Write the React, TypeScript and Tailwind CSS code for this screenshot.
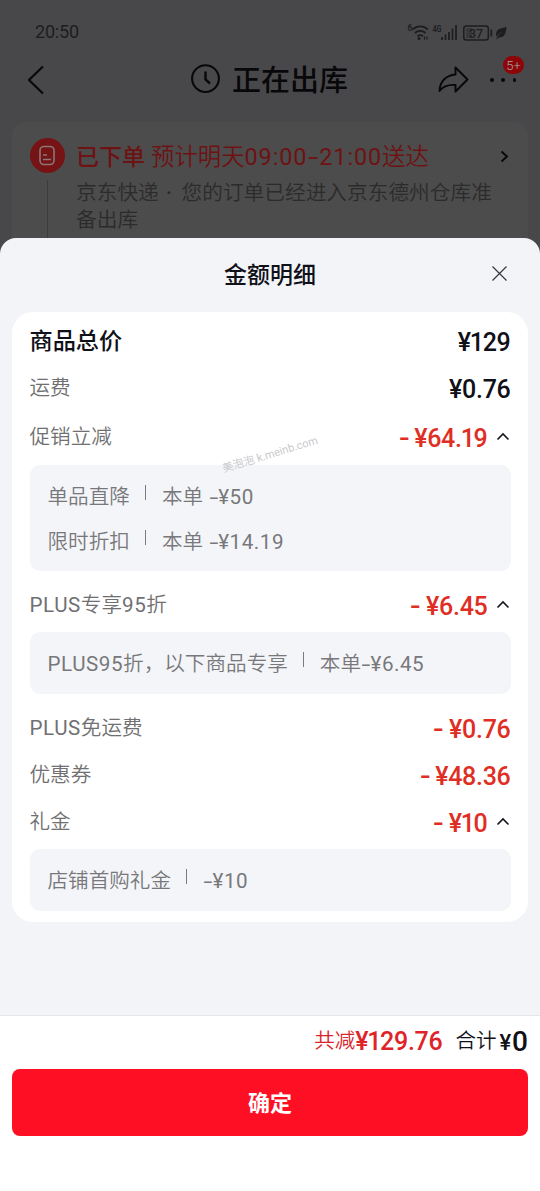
import { Fragment } from "react";

/* Latin runs are set slightly wider than the Chinese around them. */
function Mixed({ text, wide }: { text: string; wide?: boolean }) {
  const runs = text.match(/-|[\x20-\x2c\x2e-\x7e¥]+|[^\x20-\x7e¥]+/g) ?? [];
  return (
    <>
      {runs.map((run, i) => {
        if (run === "-") return <span key={i} className={`inline-block text-center font-normal ${wide ? "w-[12px]" : "w-[9.500px]"}`}><span className="inline-block scale-x-[1.550]">-</span></span>;
        if (/[\x20-\x7e¥]/.test(run)) return <span key={i} className={`font-normal ${wide ? "tracking-[0.900px]" : "tracking-[0.550px]"}`}>{run}</span>;
        return <Fragment key={i}>{run}</Fragment>;
      })}
    </>
  );
}

function Digits({ text }: { text: string }) {
  return (
    <span className="flex">
      {text.split("").map((c, i) => (
        <span key={i} className={c === "1" ? "-mr-[1px] -ml-[1px]" : ""}>{c}</span>
      ))}
    </span>
  );
}

function Chevron() {
  return (
    <svg className="mr-px ml-[8px] h-[14px] w-[14px]" viewBox="0 0 14 14" fill="none" stroke="#15151b" strokeWidth="1.600">
      <path d="M1.500 9.500 7 4l5.500 5.500" />
    </svg>
  );
}

function Amount({ text, discount }: { text: string; discount?: boolean }) {
  return (
    <span className={`flex items-center pt-[2px] text-[25px] leading-none font-medium tracking-[-0.300px] ${discount ? "text-[#df2f24]" : "text-[#101018]"}`}>
      {discount && <span className="mr-[6px] w-[9px] text-center"><span className="inline-block scale-x-[1.250]">-</span></span>}
      <Digits text={text} />
    </span>
  );
}

function Row({ label, amount, className, open, discount }: { label: string; amount: string; className: string; open?: boolean; discount?: boolean }) {
  return (
    <div className={`flex shrink-0 items-center justify-between ${className}`}>
      <span className="pt-[1px] text-[20.600px] leading-none font-[350] text-[#707072]"><Mixed text={label} /></span>
      <span className="flex items-center">
        <Amount text={amount} discount={discount} />
        {open && <Chevron />}
      </span>
    </div>
  );
}

function Detail({ name, value }: { name: string; value: string }) {
  return (
    <div className="flex h-[45px] items-center text-[20.600px] leading-none font-[350] text-[#78787b]">
      <span className="pt-[3px]"><Mixed text={name} /></span>
      <span className="mr-[16px] mb-[7px] ml-[15px] h-[15px] w-px bg-[#7c7c7f]" />
      <span className="pt-[3px] whitespace-pre"><Mixed text={value} /></span>
    </div>
  );
}

function StatusIcons() {
  return (
    <svg className="h-[20px] w-[102px]" viewBox="407 21 102 20" fill="none">
      <text x="407.500" y="30" fontSize="8.500" fontWeight="600" fill="#1d1d1f">6</text>
      <g stroke="#1d1d1f" strokeWidth="1.800">
        <path d="M412.500 28.500c4.500-4.200 11-4.200 15.500 0M415 32c3-2.700 7.500-2.700 10.500 0M417.500 35.200c1.600-1.300 3.800-1.300 5.400 0" />
      </g>
      <circle cx="419" cy="37.500" r="1.500" fill="#1d1d1f" />
      <path d="M424.500 35.500v3M427 35.500v3" stroke="#1d1d1f" strokeWidth="1.200" />
      <text x="432.500" y="31" fontSize="9" fontWeight="600" fill="#1d1d1f" textLength="9" lengthAdjust="spacingAndGlyphs">4G</text>
      <path d="M442 36v3M445.500 33.500V39M449 31v8M452.500 27.500V39M456 24v15" stroke="#1d1d1f" strokeWidth="1.700" />
      <rect x="463.800" y="25" width="24.500" height="14" rx="2.500" stroke="#1d1d1f" strokeWidth="1.500" />
      <rect x="466" y="27" width="6" height="10" fill="#38383a" />
      <text x="469" y="36.600" fontSize="13" fontWeight="500" fill="#1d1d1f" textLength="14" lengthAdjust="spacingAndGlyphs">37</text>
      <path d="M491.300 28.500v7" stroke="#1d1d1f" strokeWidth="1.700" />
      <path d="M506.500 26c-6 1.200-10 2-10.500 7 0 1.300.2 2 .6 2.600 2-2.600 3.900-4.100 6-5.100-2.500 1.800-4.700 4-6.400 7.300l1 .4 1-1.700c6 .8 8-4.500 8.300-10.500Z" fill="#1d1d1f" />
    </svg>
  );
}

export default function App() {
  return (
    <div className="relative flex h-[1191px] w-[540px] flex-col overflow-hidden bg-[#48484a] font-[Roboto,'Noto_Sans_CJK_SC',sans-serif]">
      <header className="flex h-[122px] shrink-0 flex-col">
        <div className="flex h-[42px] items-end justify-between pr-[31px] pl-[35px]">
          <span className="mb-[1px] text-[18px] leading-[18px] tracking-[-0.200px] text-[#1d1d1f]">20:50</span>
          <StatusIcons />
        </div>
        <div className="flex h-[76px] items-center pl-[26px]">
          <svg className="h-[32px] w-[20px]" viewBox="0 0 20 32" fill="none" stroke="#08080a" strokeWidth="2.200">
            <path d="M17 2.500 3 16l14 13.500" />
          </svg>
          <svg className="ml-[144px] h-[32px] w-[32px]" viewBox="0 0 32 32" fill="none" stroke="#08080a" strokeWidth="2.100">
            <circle cx="15.500" cy="14.600" r="13.400" />
            <path d="M15.500 7.500v8l4.500 4" strokeWidth="2.400" />
          </svg>
          <span className="ml-[10px] pt-[2px] text-[29px] leading-none font-medium text-[#08080a]">正在出库</span>
          <svg className="ml-[89px] h-[32px] w-[32px]" viewBox="437 64 32 32" fill="none" stroke="#08080a" strokeWidth="1.900" strokeLinejoin="round">
            <path d="M455.500 67.500 467.500 79.500 455.500 91.500V85c-7-.5-12.500 1.300-16 6 .2-9.500 6.500-15.700 16-16.500Z" />
          </svg>
          <span className="relative ml-[20px] flex h-[32px] w-[28px] items-center justify-between px-[1px]">
            <i className="h-[3.500px] w-[3.500px] rounded-full bg-[#08080a]" />
            <i className="h-[3.500px] w-[3.500px] rounded-full bg-[#08080a]" />
            <i className="h-[3.500px] w-[3.500px] rounded-full bg-[#08080a]" />
            <b className="absolute top-[-8px] left-[14px] flex h-[18px] w-[21px] items-center justify-center rounded-full bg-[#8d0508] text-[13px] leading-none font-light text-[#aaa]">5+</b>
          </span>
        </div>
      </header>
      <section className="mx-[12px] flex h-[140px] shrink-0 rounded-t-[14px] bg-[#4c4c4c] pt-[16px] pl-[17px]">
        <div className="flex w-[36px] shrink-0 flex-col items-center">
          <span className="flex h-[35px] w-[35px] items-center justify-center rounded-full bg-[#751315]">
            <svg className="h-[21px] w-[18px]" viewBox="0 0 18 21" fill="none" stroke="#8b7777" strokeWidth="1.600">
              <rect x="2" y="1.500" width="14" height="18" rx="4" />
              <path d="M5 10h4M5 14.500h8" />
            </svg>
          </span>
          <span className="mt-[7px] h-[80px] w-px bg-[#3c3c3c]" />
        </div>
        <div className="ml-[11px] flex flex-col">
          <div className="flex h-[38px] items-center text-[#6e1213]">
            <span className="text-[23px] leading-none font-medium">已下单</span>
            <span className="ml-[6px] pt-[1px] text-[23.400px] leading-none font-[350] whitespace-nowrap"><Mixed text="预计明天09:00-21:00送达" wide /></span>
          </div>
          <p className="mt-[4px] w-[430px] text-[20.700px] leading-[27px] font-[350] whitespace-nowrap text-[#2b2b2b]">
            京东快递<span className="font-medium whitespace-pre tracking-[2.200px]"> · </span>您的订单已经进入京东德州仓库准<br />备出库
          </p>
        </div>
        <svg className="absolute top-[149px] left-[498px] h-[15px] w-[12px]" viewBox="0 0 12 15" fill="none" stroke="#08080a" strokeWidth="1.900">
          <path d="M3.500 2.500 9 7.500 3.500 12.500" />
        </svg>
      </section>

      <main className="absolute inset-x-0 top-[238px] bottom-0 flex flex-col rounded-t-[16px] bg-[#f3f4f8]">
        <div className="flex h-[74px] shrink-0 items-center justify-center">
          <h1 className="text-[23px] leading-none font-medium text-[#101018]">金额明细</h1>
          <svg className="absolute top-[27px] left-[491px] h-[17px] w-[17px]" viewBox="0 0 17 17" fill="none" stroke="#36363d" strokeWidth="1.200">
            <path d="m1.500 1.500 14 14M15.500 1.500l-14 14" />
          </svg>
        </div>

        <section className="mx-[12px] flex h-[610px] shrink-0 flex-col rounded-[21px] bg-white px-[17.500px]">
          <div className="flex h-[58px] shrink-0 items-center justify-between">
            <span className="pt-[1px] text-[23.200px] leading-none font-medium text-[#101018]">商品总价</span>
            <Amount text="¥129" />
          </div>
          <Row label="运费" amount="¥0.76" className="h-[36px]" />
          <Row label="促销立减" amount="¥64.19" className="mt-[3px] h-[56px]" open discount />
          <div className="flex h-[106px] shrink-0 flex-col justify-center rounded-[10px] bg-[#f4f5f9] pl-[18px]">
            <Detail name="单品直降" value="本单 -¥50" />
            <Detail name="限时折扣" value="本单 -¥14.19" />
          </div>
          <Row label="PLUS专享95折" amount="¥6.45" className="mt-[7px] h-[54px]" open discount />
          <div className="flex h-[62px] shrink-0 flex-col justify-center rounded-[10px] bg-[#f4f5f9] pl-[18px]">
            <Detail name="PLUS95折，以下商品专享" value="本单-¥6.45" />
          </div>
          <Row label="PLUS免运费" amount="¥0.76" className="mt-[10px] h-[48px]" discount />
          <Row label="优惠券" amount="¥48.36" className="h-[46px]" discount />
          <Row label="礼金" amount="¥10" className="mb-[3px] h-[48px]" open discount />
          <div className="flex h-[62px] shrink-0 flex-col justify-center rounded-[10px] bg-[#f4f5f9] pl-[18px]">
            <Detail name="店铺首购礼金" value="-¥10" />
          </div>
        </section>

        <footer className="mt-auto flex h-[176px] shrink-0 flex-col border-t border-[#e6e7ea] bg-white px-[12px]">
          <div className="flex h-[53px] items-center justify-end pb-[2px]">
            <span className="text-[20.500px] leading-none font-[350] text-[#d9232b]">共减</span>
            <span className="text-[25px] leading-none font-medium tracking-[-0.300px] text-[#df2329]"><Digits text="¥129.76" /></span>
            <span className="ml-[13px] text-[20.500px] leading-none font-[350] text-[#101018]">合计</span>
            <span className="mt-[3px] mr-[1px] ml-[3px] text-[22px] leading-none font-medium text-[#101018]">¥</span>
            <span className="text-[28px] leading-none font-medium text-[#101018]">0</span>
          </div>
          <button className="flex h-[67px] items-center justify-center rounded-[8px] bg-[#ff0f23] pt-[2px] text-[22px] leading-none font-bold text-white">确定</button>
        </footer>
        <span className="absolute top-[209px] left-[220px] flex h-[14px] w-[100px] rotate-[-17deg] items-center justify-center text-[11px] leading-none whitespace-nowrap text-[#c9c9cc]">美泡泡 k.meinb.com</span>
      </main>
    </div>
  );
}
